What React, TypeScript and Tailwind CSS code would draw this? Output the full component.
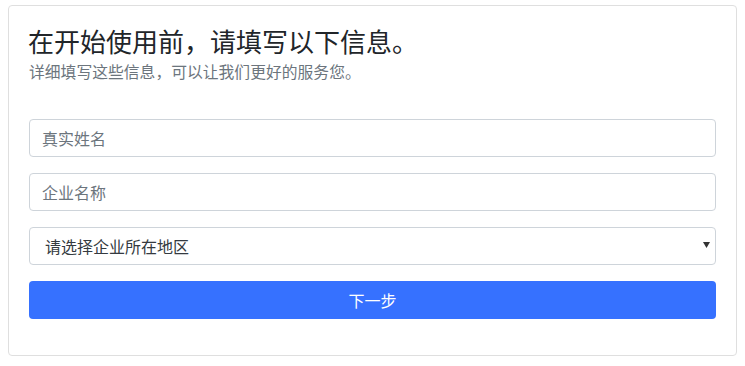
import { useState } from "react"

export default function App() {
  const [form, setForm] = useState({ name: "", company: "", region: "" })

  return (
    <div className="px-2 pt-[5px] font-['Noto_Sans_CJK_SC','Noto_Sans',sans-serif]">
      <div className="rounded border border-[#dfdfdf] bg-white px-5 pt-[16px] pb-[36px]">
        <h3 className="-ml-px text-[26px] leading-[38px] text-[#212529]">在开始使用前，请填写以下信息。</h3>
        <p className="text-[15.8px] leading-6 text-[#6c757d]">详细填写这些信息，可以让我们更好的服务您。</p>

        <form className="mt-[35px] flex flex-col gap-4" onSubmit={(e) => e.preventDefault()}>
          <input
            className="h-[38px] w-full rounded border border-[#ced4da] px-3 text-base text-[#495057] placeholder:text-[#6c757d] outline-none"
            placeholder="真实姓名"
            value={form.name}
            onChange={(e) => setForm({ ...form, name: e.target.value })}
          />
          <input
            className="h-[38px] w-full rounded border border-[#ced4da] px-3 text-base text-[#495057] placeholder:text-[#6c757d] outline-none"
            placeholder="企业名称"
            value={form.company}
            onChange={(e) => setForm({ ...form, company: e.target.value })}
          />
          <div className="relative">
            <select
              className="h-[38px] w-full appearance-none rounded border border-[#ced4da] bg-white pl-[15px] pr-8 text-base text-[#343a40] outline-none"
              value={form.region}
              onChange={(e) => setForm({ ...form, region: e.target.value })}
            >
              <option value="">请选择企业所在地区</option>
              <option value="bj">北京</option>
              <option value="sh">上海</option>
            </select>
            <svg className="pointer-events-none absolute right-[6px] top-[15px]" width="7" height="6" viewBox="0 0 7 6">
              <path d="M0 0h7L3.5 6z" fill="#333" />
            </svg>
          </div>
          <button
            type="submit"
            className="h-[38px] w-full rounded bg-[#3671ff] text-base text-white"
          >
            下一步
          </button>
        </form>
      </div>
    </div>
  )
}
